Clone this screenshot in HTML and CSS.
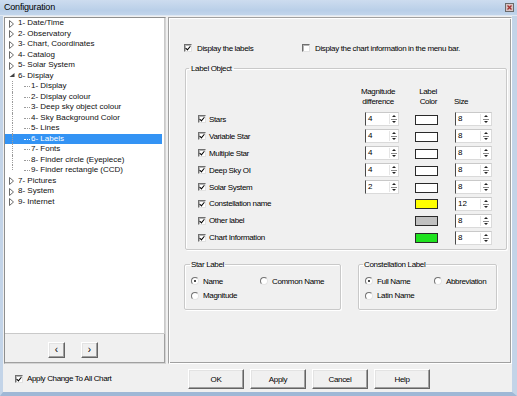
FILE: index.html
```html
<!DOCTYPE html>
<html>
<head>
<meta charset="utf-8">
<link rel="stylesheet" href="styles.css">
</head>
<body>
<div class="window">
  <div class="titlebar">
    <span class="title">Configuration</span>
    <span class="close"><svg width="9" height="9" viewBox="0 0 9 9"><rect x="0.5" y="0.5" width="8" height="8" fill="#d8c4c4" stroke="#6a6a6a"/><path d="M2.5 2.5 L6.5 6.5 M6.5 2.5 L2.5 6.5" stroke="#a03030" stroke-width="1.3"/></svg></span>
  </div>
  <div class="frame">
    <div class="main">
      <div class="left">
        <div class="tree">
          <div class="node"><svg class="exp" width="5" height="8" viewBox="0 0 5 8"><path d="M0.5 0.5 L4.5 4 L0.5 7.5 Z" fill="none" stroke="#6b6b6b"/></svg>1- Date/Time</div>
          <div class="node"><svg class="exp" width="5" height="8" viewBox="0 0 5 8"><path d="M0.5 0.5 L4.5 4 L0.5 7.5 Z" fill="none" stroke="#6b6b6b"/></svg>2- Observatory</div>
          <div class="node"><svg class="exp" width="5" height="8" viewBox="0 0 5 8"><path d="M0.5 0.5 L4.5 4 L0.5 7.5 Z" fill="none" stroke="#6b6b6b"/></svg>3- Chart, Coordinates</div>
          <div class="node"><svg class="exp" width="5" height="8" viewBox="0 0 5 8"><path d="M0.5 0.5 L4.5 4 L0.5 7.5 Z" fill="none" stroke="#6b6b6b"/></svg>4- Catalog</div>
          <div class="node"><svg class="exp" width="5" height="8" viewBox="0 0 5 8"><path d="M0.5 0.5 L4.5 4 L0.5 7.5 Z" fill="none" stroke="#6b6b6b"/></svg>5- Solar System</div>
          <div class="node open"><svg class="exp" width="6" height="8" viewBox="0 0 6 8"><path d="M0.5 5 L5.5 5 L5.5 1 Z" fill="#404040"/></svg>6- Display</div>
          <div class="node sub">1- Display</div>
          <div class="node sub">2- Display colour</div>
          <div class="node sub">3- Deep sky object colour</div>
          <div class="node sub">4- Sky Background Color</div>
          <div class="node sub">5- Lines</div>
          <div class="node sub selected">6- Labels</div>
          <div class="node sub">7- Fonts</div>
          <div class="node sub">8- Finder circle (Eyepiece)</div>
          <div class="node sub last">9- Finder rectangle (CCD)</div>
          <div class="node"><svg class="exp" width="5" height="8" viewBox="0 0 5 8"><path d="M0.5 0.5 L4.5 4 L0.5 7.5 Z" fill="none" stroke="#6b6b6b"/></svg>7- Pictures</div>
          <div class="node"><svg class="exp" width="5" height="8" viewBox="0 0 5 8"><path d="M0.5 0.5 L4.5 4 L0.5 7.5 Z" fill="none" stroke="#6b6b6b"/></svg>8- System</div>
          <div class="node"><svg class="exp" width="5" height="8" viewBox="0 0 5 8"><path d="M0.5 0.5 L4.5 4 L0.5 7.5 Z" fill="none" stroke="#6b6b6b"/></svg>9- Internet</div>
        </div>
        <div class="nav">
          <span class="btn small">&lsaquo;</span>
          <span class="btn small">&rsaquo;</span>
        </div>
      </div>

      <div class="right">
        <div class="toprow">
          <label class="chk first"><span class="cb on"></span>Display the labels</label>
          <label class="chk"><span class="cb"></span>Display the chart information in the menu bar.</label>
        </div>

        <fieldset class="grp labelobj">
          <legend>Label Object</legend>
          <div class="heads">
            <div class="h-mag">Magnitude<br>difference</div>
            <div class="h-col">Label<br>Color</div>
            <div class="h-size"><br>Size</div>
          </div>
          <div class="rows">
            <label class="chk row"><span class="cb on"></span>Stars</label>
            <div class="spin"><span class="val">4</span><span class="arr"></span></div>
            <span class="swatch"></span>
            <div class="spin size"><span class="val">8</span><span class="arr"></span></div>

            <label class="chk row"><span class="cb on"></span>Variable Star</label>
            <div class="spin"><span class="val">4</span><span class="arr"></span></div>
            <span class="swatch"></span>
            <div class="spin size"><span class="val">8</span><span class="arr"></span></div>

            <label class="chk row"><span class="cb on"></span>Multiple Star</label>
            <div class="spin"><span class="val">4</span><span class="arr"></span></div>
            <span class="swatch"></span>
            <div class="spin size"><span class="val">8</span><span class="arr"></span></div>

            <label class="chk row"><span class="cb on"></span>Deep Sky OI</label>
            <div class="spin"><span class="val">4</span><span class="arr"></span></div>
            <span class="swatch"></span>
            <div class="spin size"><span class="val">8</span><span class="arr"></span></div>

            <label class="chk row"><span class="cb on"></span>Solar System</label>
            <div class="spin"><span class="val">2</span><span class="arr"></span></div>
            <span class="swatch"></span>
            <div class="spin size"><span class="val">8</span><span class="arr"></span></div>

            <label class="chk row"><span class="cb on"></span>Constellation name</label>
            <span class="empty"></span>
            <span class="swatch yellow"></span>
            <div class="spin size"><span class="val">12</span><span class="arr"></span></div>

            <label class="chk row"><span class="cb on"></span>Other label</label>
            <span class="empty"></span>
            <span class="swatch grey"></span>
            <div class="spin size"><span class="val">8</span><span class="arr"></span></div>

            <label class="chk row"><span class="cb on"></span>Chart Information</label>
            <span class="empty"></span>
            <span class="swatch green"></span>
            <div class="spin size"><span class="val">8</span><span class="arr"></span></div>
          </div>
        </fieldset>

        <div class="lowgroups">
          <fieldset class="grp radios star">
            <legend>Star Label</legend>
            <div class="rgrid">
              <label class="rad"><span class="rb on"></span>Name</label>
              <label class="rad"><span class="rb"></span>Common Name</label>
              <label class="rad"><span class="rb"></span>Magnitude</label>
            </div>
          </fieldset>
          <fieldset class="grp radios const">
            <legend>Constellation Label</legend>
            <div class="rgrid">
              <label class="rad"><span class="rb on"></span>Full Name</label>
              <label class="rad"><span class="rb"></span>Abbreviation</label>
              <label class="rad"><span class="rb"></span>Latin Name</label>
            </div>
          </fieldset>
        </div>
      </div>
    </div>

    <div class="bottom">
      <div class="applyall">
        <label class="chk"><span class="cb on"></span>Apply Change To All Chart</label>
      </div>
      <div class="buttons">
        <span class="btn">OK</span>
        <span class="btn">Apply</span>
        <span class="btn">Cancel</span>
        <span class="btn">Help</span>
      </div>
    </div>
  </div>
</div>
</body>
</html>
```

FILE: styles.css
```css
* { box-sizing: border-box; }

html, body {
  margin: 0;
  padding: 0;
  background: #f0f0f0;
}

body {
  font-family: "Liberation Sans", Arial, sans-serif;
  font-size: 8px;
  color: #000;
}

.window {
  width: 517px;
  height: 396px;
  display: flex;
  flex-direction: column;
  overflow: hidden;
}

/* title bar */
.titlebar {
  height: 16px;
  flex: none;
  display: flex;
  align-items: center;
  justify-content: space-between;
  padding: 0 3px 1px 4px;
  background: linear-gradient(#cddcef, #b9cfe8 70%, #c2d5eb);
  border-bottom: 1px solid #dfe8f3;
}

.title {
  font-size: 9px;
  letter-spacing: -0.2px;
  color: #000;
}

.close {
  display: flex;
  margin-top: 1px;
}

/* frame */
.frame {
  flex: 1;
  display: flex;
  flex-direction: column;
  border-left: 3px solid #c3d4e8;
  border-right: 5px solid #c3d4e8;
  border-bottom: 4px solid #9fb8d6;
  padding: 1px 0 0 1px;
  background: #f0f0f0;
}

.main {
  display: flex;
  gap: 2px;
  height: 347px;
  flex: none;
}

/* left tree panel */
.left {
  width: 162px;
  flex: none;
  display: flex;
  flex-direction: column;
  border: 1px solid #8e8f8f;
  border-right-color: #d4d4d4;
  border-bottom-color: #d4d4d4;
  box-shadow: inset -1px -1px 0 #a0a0a0;
}

.tree {
  height: 316px;
  background: #fff;
  border-bottom: 1px solid #c9c9c9;
  border-right: 1px solid #c9c9c9;
  padding-top: 0;
}

.node {
  position: relative;
  height: 10.5px;
  line-height: 10.5px;
  padding-left: 13px;
  white-space: nowrap;
  color: #101010;
}

.node .exp {
  position: absolute;
  left: 4px;
  top: 1.5px;
}

.node.open .exp {
  left: 4px;
  top: 1px;
}

.node.sub {
  padding-left: 26px;
}

.node.sub::before {
  content: "";
  position: absolute;
  left: 7px;
  top: 0;
  height: 10.5px;
  border-left: 1px dotted #9a9a9a;
}

.node.sub.last::before {
  height: 5px;
}

.node.sub::after {
  content: "";
  position: absolute;
  left: 19px;
  width: 6px;
  top: 5px;
  border-top: 1px dotted #9a9a9a;
}

.node.selected {
  background: #3393f4;
  color: #fff;
  margin-right: 2px;
}

.node.selected::after {
  border-top-color: #fff;
}

.nav {
  flex: 1;
  display: flex;
  align-items: center;
  gap: 16px;
  padding-left: 43px;
  padding-top: 2px;
}

/* buttons */
.btn {
  display: inline-flex;
  align-items: center;
  justify-content: center;
  background: #f0f0f0;
  border: 1px solid;
  border-color: #ffffff #646464 #646464 #ffffff;
  box-shadow: inset -1px -1px 0 #a0a0a0, inset 1px 1px 0 #e3e3e3;
  letter-spacing: -0.35px;
  color: #000;
}

.btn.small {
  width: 17px;
  height: 16px;
  font-size: 10px;
  letter-spacing: 0;
  padding-bottom: 1px;
}

/* right panel */
.right {
  flex: 1;
  border: 1px solid #a0a0a0;
  border-right-color: #ffffff;
  border-bottom-color: #ffffff;
  box-shadow: inset 1px 1px 0 #ffffff, inset -1px -1px 0 #a0a0a0;
  padding: 25px 0 0 15px;
  letter-spacing: -0.35px;
}

.toprow {
  display: flex;
  height: 10px;
  align-items: center;
}

.chk {
  display: flex;
  align-items: center;
  gap: 5px;
  white-space: nowrap;
}

.chk.first {
  width: 118px;
}

.cb {
  position: relative;
  width: 8px;
  height: 8px;
  flex: none;
  background: #fff;
  border: 1px solid;
  border-color: #6f6f6f #e2e2e2 #e2e2e2 #6f6f6f;
  box-shadow: inset 1px 1px 0 #b4b4b4;
}

.cb.on::after {
  content: "";
  position: absolute;
  left: 1px;
  top: 0px;
  width: 2px;
  height: 4px;
  border: solid #000;
  border-width: 0 1.5px 1.5px 0;
  transform: translate(0.5px, 0) rotate(40deg);
}

/* group boxes */
.grp {
  margin: 0;
  padding: 0;
  min-width: 0;
  border: 1px solid #c9c9c9;
  border-radius: 2px;
  box-shadow: inset 1px 1px 0 #fff, 1px 1px 0 #fff;
}

.grp legend {
  padding: 0 2px;
  margin-left: 3px;
  line-height: 9px;
  height: 9px;
}

.labelobj {
  margin: 11px 0 0 1px;
  width: 322px;
  height: 186px;
}

.heads {
  display: flex;
  margin-top: 14px;
  line-height: 9.5px;
  height: 19px;
}

.h-mag {
  width: 44px;
  margin-left: 170px;
  text-align: center;
}

.h-col {
  width: 23px;
  margin-left: 14px;
  text-align: right;
}

.h-size {
  margin-left: 17px;
}

.rows {
  display: grid;
  grid-template-columns: 167px 34px 39px 54px;
  grid-auto-rows: 16.9px;
  column-gap: 0;
  align-items: center;
  margin-top: 5px;
  padding-left: 12px;
}

.rows > :nth-child(4n+3) {
  margin-left: 16px;
}

.rows > :nth-child(4n) {
  margin-left: 17px;
}

.chk.row {
  gap: 3px;
}

.spin {
  display: flex;
  width: 34px;
  height: 14px;
  background: #fff;
  border: 1px solid;
  border-color: #c9c9c9 #dadada #dadada #4a4a4a;
  letter-spacing: 0;
}

.spin.size {
  width: 37px;
}

.spin .val {
  flex: 1;
  padding-left: 2px;
  line-height: 12px;
}

.spin .arr {
  position: relative;
  width: 8px;
  margin: 1px 1px 1px 0;
  border-left: 1px solid #e6e6e6;
  background:
    linear-gradient(#8a8a8a, #8a8a8a) center 5px / 6px 1px no-repeat;
}

.spin.size .arr {
  width: 10px;
  margin-right: 1px;
}

.spin .arr::before,
.spin .arr::after {
  content: "";
  position: absolute;
  left: 50%;
  margin-left: -2px;
  border-left: 2px solid transparent;
  border-right: 2px solid transparent;
}

.spin .arr::before {
  top: 1px;
  border-bottom: 2px solid #222;
}

.spin .arr::after {
  bottom: 1px;
  border-top: 2px solid #222;
}

.swatch {
  width: 23px;
  height: 10px;
  background: #fff;
  border: 1px solid #2a2a2a;
  margin-top: 1px;
}

.swatch.yellow { background: #ffff00; }
.swatch.grey { background: #c0c0c0; }
.swatch.green { background: #1fe21f; }

/* bottom radio groups */
.lowgroups {
  display: flex;
  gap: 17px;
  margin-top: 10px;
}

.radios {
  height: 50px;
}

.radios.star { width: 157px; }
.radios.const { width: 139px; }

.radios.star legend { margin-left: 5px; padding: 0 1px; }
.radios.const legend { margin-left: 4px; padding: 0 1px; }

.rgrid {
  display: grid;
  grid-template-columns: 69px auto;
  grid-auto-rows: 14.5px;
  align-items: center;
  padding: 5px 0 0 6px;
}

.const .rgrid {
  padding-left: 6px;
}

.rad {
  display: flex;
  align-items: center;
  gap: 4px;
  white-space: nowrap;
}

.rb {
  position: relative;
  width: 8px;
  height: 8px;
  flex: none;
  border-radius: 50%;
  border: 1px solid;
  border-color: #727272 #e4e4e4 #e4e4e4 #727272;
  background: #fff;
}

.rb.on::after {
  content: "";
  position: absolute;
  left: 2px;
  top: 2px;
  width: 2px;
  height: 2px;
  border-radius: 50%;
  background: #111;
}

/* bottom bar */
.bottom {
  flex: 1;
  display: grid;
  grid-template-columns: 184px auto;
  align-items: center;
  letter-spacing: -0.35px;
}

.applyall {
  padding-left: 11px;
  padding-top: 1px;
}

.applyall .chk {
  gap: 4px;
}

.buttons {
  display: flex;
  gap: 6px;
  padding-top: 2px;
}

.buttons .btn {
  width: 56px;
  height: 20px;
}
```
